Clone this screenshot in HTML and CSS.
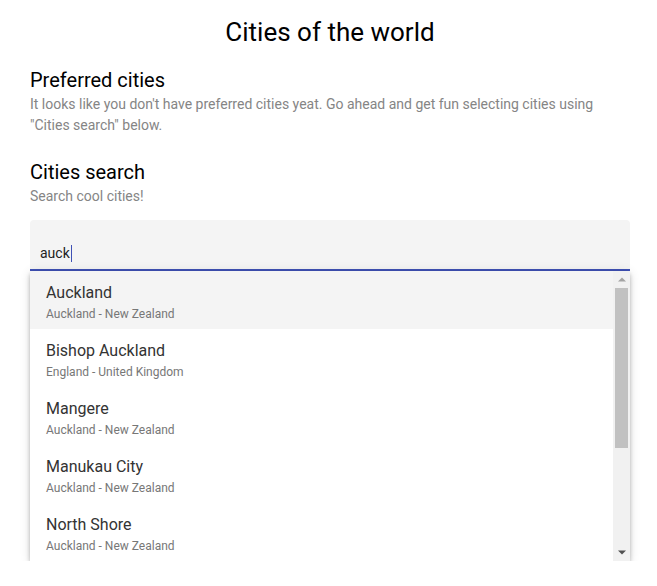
FILE: index.html
```html
<!DOCTYPE html>
<html lang="en">
<head>
<meta charset="utf-8">
<title>Cities of the world</title>
<link rel="stylesheet" href="styles.css">
</head>
<body>
<main class="page">
  <h1 class="title">Cities of the world</h1>
  <section class="section first">
    <h2 class="section-title">Preferred cities</h2>
    <p class="hint">It looks like you don't have preferred cities yeat. Go ahead and get fun selecting cities using "Cities search" below.</p>
  </section>
  <section class="section search-section">
    <h2 class="section-title">Cities search</h2>
    <p class="hint">Search cool cities!</p>
    <div class="field">
      <div class="field-box">
        <span class="field-value">auck</span><span class="caret"></span>
      </div>
      <div class="panel">
        <div class="options">
          <div class="option active"><span class="option-name">Auckland</span><span class="option-sub">Auckland - New Zealand</span></div>
          <div class="option"><span class="option-name">Bishop Auckland</span><span class="option-sub">England - United Kingdom</span></div>
          <div class="option"><span class="option-name">Mangere</span><span class="option-sub">Auckland - New Zealand</span></div>
          <div class="option"><span class="option-name">Manukau City</span><span class="option-sub">Auckland - New Zealand</span></div>
          <div class="option"><span class="option-name">North Shore</span><span class="option-sub">Auckland - New Zealand</span></div>
        </div>
        <div class="scrollbar">
          <div class="sb-button">
            <svg width="8" height="5" viewBox="0 0 8 5"><path d="M0 4.5L4 0.5L8 4.5Z" fill="#a3a3a3"/></svg>
          </div>
          <div class="sb-track"><div class="sb-thumb"></div></div>
          <div class="sb-button">
            <svg width="8" height="5" viewBox="0 0 8 5"><path d="M0 0.5L4 4.5L8 0.5Z" fill="#505050"/></svg>
          </div>
        </div>
      </div>
    </div>
  </section>
</main>
</body>
</html>
```
FILE: styles.css
```css
html, body {
  margin: 0;
  padding: 0;
  background: #fff;
}
body {
  font-family: Roboto, "Liberation Sans", sans-serif;
  color: #000;
}
.page {
  padding: 0 27px 0 30px;
  display: flex;
  flex-direction: column;
}
.title {
  margin: 16px 0 0;
  font-size: 26px;
  line-height: 32px;
  font-weight: 400;
  text-align: center;
}
.section {
  display: flex;
  flex-direction: column;
}
.section-title {
  margin: 0;
  font-size: 20px;
  line-height: 28px;
  font-weight: 400;
}
.first {
  margin-top: 18px;
}
.search-section {
  margin-top: 22px;
}
.hint {
  margin: 0;
  font-size: 14px;
  line-height: 21px;
  color: #858585;
}
.field {
  margin-top: 13px;
  display: flex;
  flex-direction: column;
}
.field-box {
  background: #f4f4f4;
  border-radius: 4px 4px 0 0;
  border-bottom: 2px solid #3f51b5;
  padding: 17px 10px 0;
  height: 32px;
  display: flex;
  align-items: center;
  font-size: 14px;
  color: #222;
}
.caret {
  display: inline-block;
  width: 1px;
  height: 17px;
  background: #3f51b5;
  margin-left: 1px;
}
.panel {
  height: 290px;
  display: flex;
  background: #fff;
  box-shadow: 0 2px 4px -1px rgba(0,0,0,.2), 0 4px 5px 0 rgba(0,0,0,.14), 0 1px 10px 0 rgba(0,0,0,.12);
}
.options {
  flex: 1;
  display: flex;
  flex-direction: column;
}
.option {
  height: 58px;
  box-sizing: border-box;
  padding: 11px 16px 5px;
  display: flex;
  flex-direction: column;
}
.option.active {
  background: #f4f4f4;
}
.option-name {
  font-size: 16px;
  line-height: 22px;
  color: #333;
}
.option-sub {
  font-size: 12px;
  line-height: 20px;
  color: #777;
}
.scrollbar {
  width: 17px;
  background: #f1f1f1;
  display: flex;
  flex-direction: column;
}
.sb-button {
  height: 17px;
  display: flex;
  align-items: center;
  justify-content: center;
}
.sb-button svg {
  display: block;
}
.sb-track {
  flex: 1;
  padding: 0 2px;
}
.sb-thumb {
  height: 160px;
  background: #c1c1c1;
}
```
